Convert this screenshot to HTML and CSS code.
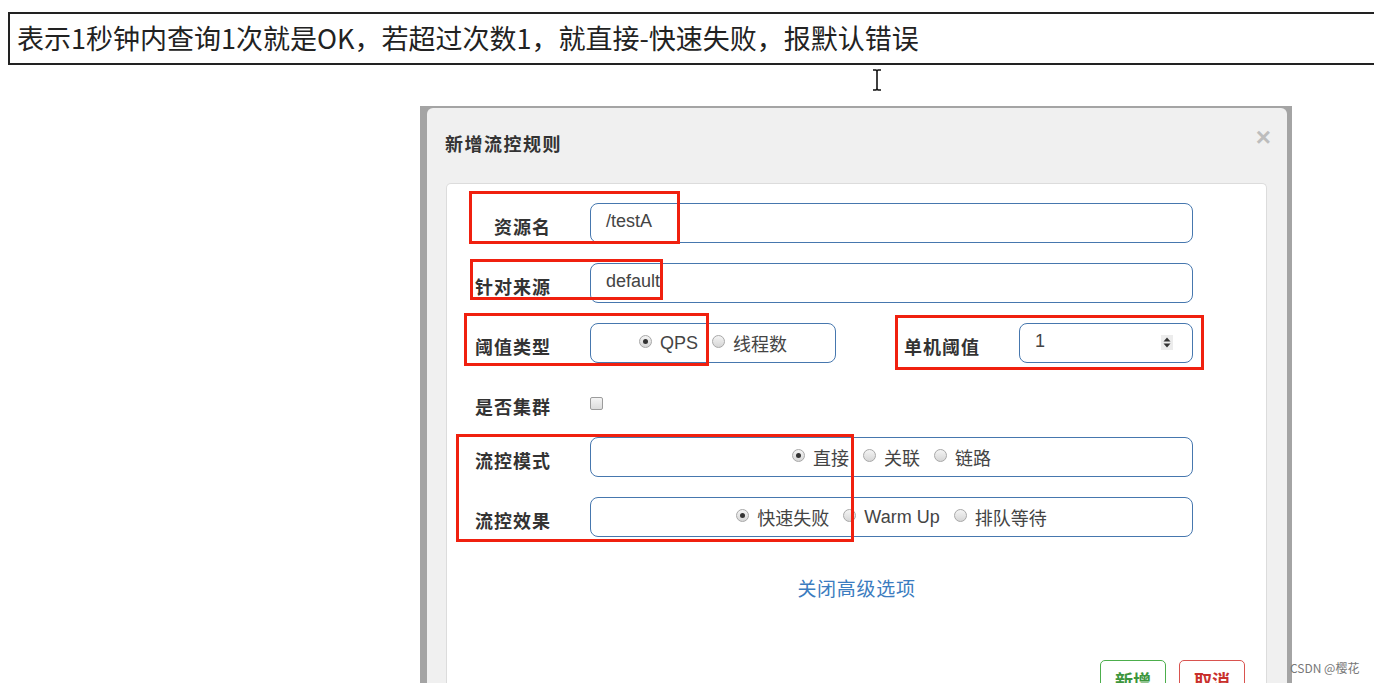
FILE: index.html
```html
<!DOCTYPE html>
<html lang="zh-CN">
<head>
<meta charset="utf-8">
<title>新增流控规则</title>
<link rel="stylesheet" href="styles.css">
</head>
<body>
<div class="page">
  <div class="note">表示1秒钟内查询1次就是OK，若超过次数1，就直接-快速失败，报默认错误</div>
  <svg class="cursor" width="10" height="22" viewBox="0 0 10 22"><path d="M1 1h3l1 1 1-1h3M5 2v18M1 21h3l1-1 1 1h3" fill="none" stroke="#111" stroke-width="1.6"/></svg>

  <div class="stage">
    <div class="modal">
      <div class="modal-head">
        <div class="modal-title">新增流控规则</div>
        <div class="close">×</div>
      </div>
      <div class="panel">
        <div class="row">
          <div class="label">资源名</div>
          <div class="box input">/testA</div>
        </div>
        <div class="row">
          <div class="label">针对来源</div>
          <div class="box input">default</div>
        </div>
        <div class="row">
          <div class="label">阈值类型</div>
          <div class="split">
            <div class="box radios narrow">
              <span class="opt"><i class="radio on"></i>QPS</span>
              <span class="opt"><i class="radio"></i>线程数</span>
            </div>
            <div class="side">
              <div class="label side-label">单机阈值</div>
              <div class="box input num">1<span class="spin"><svg width="8" height="11" viewBox="0 0 8 11"><path d="M4 0.5L7.5 4.5H0.5Z M4 10.5L7.5 6.5H0.5Z" fill="#333"/></svg></span></div>
            </div>
          </div>
        </div>
        <div class="row short">
          <div class="label">是否集群</div>
          <div class="checkwrap"><i class="check"></i></div>
        </div>
        <div class="row">
          <div class="label">流控模式</div>
          <div class="box radios">
            <span class="opt"><i class="radio on"></i>直接</span>
            <span class="opt"><i class="radio"></i>关联</span>
            <span class="opt"><i class="radio"></i>链路</span>
          </div>
        </div>
        <div class="row">
          <div class="label">流控效果</div>
          <div class="box radios">
            <span class="opt"><i class="radio on"></i>快速失败</span>
            <span class="opt"><i class="radio"></i>Warm Up</span>
            <span class="opt"><i class="radio"></i>排队等待</span>
          </div>
        </div>
        <div class="more">关闭高级选项</div>
        <div class="actions">
          <div class="btn ok">新增</div>
          <div class="btn cancel">取消</div>
        </div>

        <div class="mark m1"></div>
        <div class="mark m2"></div>
        <div class="mark m3"></div>
        <div class="mark m4"></div>
        <div class="mark m5"></div>
      </div>
    </div>
  </div>
  <div class="watermark">CSDN @樱花</div>
</div>
</body>
</html>
```
FILE: styles.css
```css
html, body {
  margin: 0;
  padding: 0;
  background: #fff;
  overflow: hidden;
}
.page {
  position: relative;
  width: 1374px;
  height: 683px;
  overflow: hidden;
  font-family: "Noto Sans CJK SC", "Liberation Sans", sans-serif;
}
.note {
  box-sizing: border-box;
  margin: 12px -20px 0 8px;
  height: 53px;
  border: 2px solid #222;
  padding: 0 0 2px 7px;
  display: flex;
  align-items: center;
  font-family: "Noto Sans CJK SC", sans-serif;
  font-size: 27px;
  color: #222;
  white-space: nowrap;
}
.cursor {
  position: absolute;
  left: 872px;
  top: 69px;
}
.stage {
  box-sizing: border-box;
  margin: 41px 0 0 420px;
  width: 872px;
  height: 577px;
  background: #a4a4a4;
  padding: 2px 5px 0 7px;
}
.modal {
  height: 100%;
  background: #f0f0f0;
  border-radius: 6px 6px 0 0;
  display: flex;
  flex-direction: column;
  overflow: hidden;
}
.modal-head {
  flex-shrink: 0;
  box-sizing: border-box;
  height: 75px;
  padding: 23px 16px 0 18px;
  display: flex;
  justify-content: space-between;
  align-items: flex-start;
}
.modal-title {
  font-size: 18px;
  line-height: 24px;
  font-weight: 700;
  letter-spacing: 1.5px;
  color: #333;
}
.close {
  font-family: "Liberation Sans", sans-serif;
  font-size: 26px;
  line-height: 20px;
  margin-top: -4px;
  font-weight: 700;
  color: #bdbdbd;
}
.panel {
  position: relative;
  flex: 1;
  min-height: 0;
  margin: 0 20px 0 19px;
  background: #fff;
  border: 1px solid #dcdcdc;
  border-bottom: none;
  border-radius: 5px 5px 0 0;
  padding-top: 19px;
}
.row {
  display: grid;
  grid-template-columns: 104px 603px;
  column-gap: 39px;
  align-items: center;
  height: 40px;
  margin-bottom: 20px;
}
.row.short {
  margin-bottom: 14px;
}
.label {
  text-align: right;
  font-size: 18px;
  letter-spacing: 1px;
  font-weight: 700;
  color: #333;
  padding-top: 5px;
  white-space: nowrap;
}
.box {
  box-sizing: border-box;
  height: 40px;
  border: 1.5px solid #4677ae;
  border-radius: 8px;
  background: #fff;
}
.input {
  display: flex;
  align-items: center;
  padding: 0 0 3px 15px;
  font-family: "Liberation Sans", sans-serif;
  font-size: 18px;
  color: #444;
}
.split {
  display: flex;
  align-items: center;
}
.narrow {
  width: 246px;
}
.side {
  margin-left: auto;
  display: flex;
  align-items: center;
  gap: 39px;
}
.side-label {
  text-align: left;
}
.num {
  width: 174px;
  justify-content: space-between;
  padding-right: 19px;
}
.spin {
  display: flex;
  align-items: center;
  justify-content: center;
  width: 12px;
  height: 15px;
  background: #ececec;
  margin-top: 2px;
}
.radios {
  display: flex;
  justify-content: center;
  align-items: center;
  gap: 14px;
  font-size: 18px;
  color: #444;
}
.opt {
  display: flex;
  align-items: center;
  white-space: nowrap;
  font-family: "Liberation Sans", "Noto Sans CJK SC", sans-serif;
}
.radio {
  box-sizing: border-box;
  width: 13px;
  height: 13px;
  border-radius: 50%;
  border: 1px solid #a8a8a8;
  background: linear-gradient(#f4f4f4, #d6d6d6);
  margin-right: 8px;
  margin-top: -4px;
  display: flex;
  align-items: center;
  justify-content: center;
}
.radio.on::after {
  content: "";
  width: 5px;
  height: 5px;
  border-radius: 50%;
  background: #333;
}
.checkwrap {
  display: flex;
  align-items: center;
}
.check {
  box-sizing: border-box;
  width: 13px;
  height: 13px;
  border: 1px solid #9c9c9c;
  border-radius: 2px;
  background: linear-gradient(#f4f4f4, #dcdcdc);
}
.more {
  margin-top: 39px;
  text-align: center;
  font-size: 19px;
  letter-spacing: 0.7px;
  line-height: 24px;
  color: #3b7cc0;
}
.actions {
  margin-top: 60px;
  display: flex;
  justify-content: flex-end;
  gap: 13px;
  padding-right: 21px;
}
.btn {
  box-sizing: border-box;
  width: 66px;
  height: 38px;
  border-radius: 5px;
  border: 1.5px solid;
  display: flex;
  justify-content: center;
  padding-top: 6px;
  font-size: 18px;
  font-weight: 700;
}
.ok {
  border-color: #4cae4c;
  color: #3d963d;
}
.cancel {
  border-color: #d9534f;
  color: #c9302c;
}
.mark {
  position: absolute;
  box-sizing: border-box;
  border: 3.5px solid #f0200f;
}
.m1 { left: 22px; top: 7px; width: 211px; height: 53px; }
.m2 { left: 23px; top: 75px; width: 193px; height: 41px; }
.m3 { left: 17px; top: 129px; width: 245px; height: 53px; }
.m4 { left: 448px; top: 131px; width: 309px; height: 55px; }
.m5 { left: 9px; top: 250px; width: 398px; height: 108px; }
.watermark {
  position: absolute;
  left: 1290px;
  top: 659px;
  font-size: 12px;
  color: #777;
  font-family: "Noto Sans CJK SC", sans-serif;
}
```
